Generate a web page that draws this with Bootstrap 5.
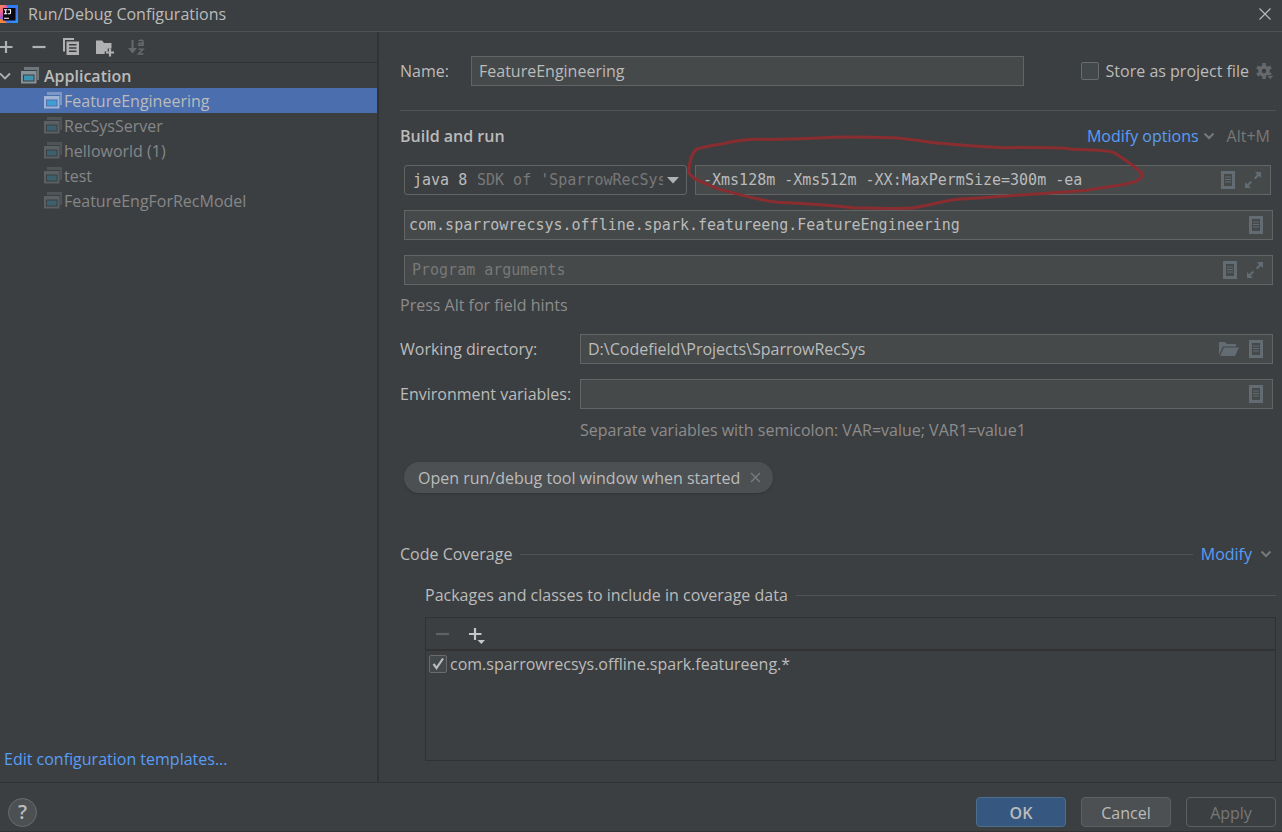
<!DOCTYPE html>
<html lang="en" data-bs-theme="dark">
<head>
<meta charset="utf-8">
<meta name="viewport" content="width=device-width, initial-scale=1">
<title>Run/Debug Configurations</title>
<link href="https://cdn.jsdelivr.net/npm/bootstrap@5.3.0/dist/css/bootstrap.min.css" rel="stylesheet">
<style>
  body { background: #3c3f41; color: #bbb; font: 16px/24px "Open Sans", "Noto Sans", sans-serif; }
  svg { display: block; flex: none; }
  a, .link-btn { color: #589df6; text-decoration: none; }
  button { color: inherit; }
  .plain { background: none; border: 0; padding: 0; }
  .titlebar { height: 32px; border-bottom: 1px solid #515151; padding: 0 10px 3px 0; }
  .title { gap: 10px; }
  .sidebar { width: 379px; border-right: 2px solid #323232; }
  .toolbar-top { height: 31px; border-bottom: 1px solid #323232; gap: 12px; margin-left: -4px; }
  .tree-item { height: 25px; color: #858789; padding-left: 44px; gap: 2px; }
  .tree-item.root { color: #bbb; font-weight: 600; padding-left: 0; gap: 5px; }
  .tree-item.selected { background: #4b6eaf; color: #bbb; }
  .tree-item .ico { opacity: .4; }
  .tree-item.selected .ico, .tree-item.root .ico { opacity: 1; }
  .edit-link { padding: 0 4px 11px; }
  .pane { padding: 24px 6px 21px 21px; min-width: 0; }
  .field { height: 30px; border: 1px solid #646464; background: #45494a; min-width: 0; padding: 0 9px 0 7px; gap: 10px; }
  .field input { background: none; border: 0; color: inherit; padding: 0; min-width: 0; outline: 0; height: 28px; }
  .field input::placeholder { color: #787878; opacity: 1; }
  .mono { font-family: "DejaVu Sans Mono", monospace; font-size: 15px; }
  .inset { margin: 0 3px 0 4px; }
  .rule { height: 1px; background: #515456; }
  .name-label { width: 71px; }
  .store { margin-left: 57px; gap: 7px; }
  .wide-label { width: 180px; }
  .head { margin: 13px 6px 17px 0; }
  .head strong { font-weight: 600; }
  .jdk-row { display: grid; grid-template-columns: 283px 1fr; gap: 8px; margin-right: 2px; }
  .jdk { border-radius: 3px; background: none; padding: 0 7px 0 8px; gap: 4px; }
  .jdk select { appearance: none; background: none; border: 0; padding: 0; color: #bbb; outline: 0; }
  .jdk label { color: #787878; white-space: pre; overflow: hidden; min-width: 0; padding-left: 5px; }
  .stack { gap: 15px; }
  .hint { color: #8c8c8c; margin: 8px 0 17px; }
  .env-hint { color: #8c8c8c; margin-top: 9px; }
  .faint { color: #787878; }
  .annotation { position: absolute; left: -16px; top: -41px; pointer-events: none; z-index: 2; }
  .check { appearance: none; width: 18px; height: 18px; margin: 0; border: 1px solid #6b6b6b; border-radius: 2px; background: #43494a; flex: none; }
  .check:checked { background: #43494a url("data:image/svg+xml,%3Csvg xmlns='http://www.w3.org/2000/svg' viewBox='0 0 16 16'%3E%3Cpath d='M3.5 8l3 4L13 2.5' fill='none' stroke='%23bbb' stroke-width='2.2'/%3E%3C/svg%3E") center/16px no-repeat; }
  .chip { height: 31px; border-radius: 16px; background: #4c5052; padding: 0 12px 0 14px; gap: 10px; box-shadow: 0 1px 2px #333; margin: 20px 0 49px 4px; }
  .packages { padding-left: 25px; margin: 17px 0 10px; }
  .box { border: 1px solid #323232; margin-left: 25px; }
  .box-tools { height: 33px; border-bottom: 2px solid #323232; padding: 0 10px; gap: 18px; }
  .box-row { gap: 3px; padding: 1px 3px; }
  .footer { border-top: 1px solid #323232; border-bottom: 1px solid #323232; padding: 14px 6px 4px 8px; gap: 15px; }
  .dlg { width: 90px; height: 30px; border: 1px solid #5e6060; border-radius: 4px; background: #4c5052; padding: 2px 0 0; }
  .dlg.ok { background: #365880; border-color: #4c708c; font-weight: 600; }
  .dlg.off { background: none; color: #777; }
  .help { width: 29px; height: 29px; border: 1px solid #6a6d6e; border-radius: 50%; background: #4c5052; font-size: 20px; font-weight: 600; padding: 0; }
</style>
</head>
<body>
<svg width="0" height="0" class="position-absolute" aria-hidden="true">
  <defs>
    <symbol id="app" viewBox="0 0 18 17"><path d="M3 0h15v13h-2V3H3z" fill="#87939a" opacity=".65"/><path d="M0 4h15.500v12.500H0zM2 7.500v7h11.500v-7z" fill="#87939a" fill-rule="evenodd"/><path d="M3 8.500h9.500v5H3z" fill="#3e93b0"/></symbol>
    <symbol id="app-sel" viewBox="0 0 18 17"><path d="M3 0h15v13h-2V3H3z" fill="#9fb4d4" opacity=".6"/><path d="M0 4h15.500v12.500H0zM2 7.500v7h11.500v-7z" fill="#9fb4d4" fill-rule="evenodd"/><path d="M3 8.500h9.500v5H3z" fill="#3f9fd5"/></symbol>
    <symbol id="list" viewBox="0 0 14 18"><path d="M0 0h14v18H0zM3 3v12h8V3z" fill="#626c72" fill-rule="evenodd"/><path d="M4 6h6M4 8.500h6M4 11h6" stroke="#626c72" stroke-width="1.200"/></symbol>
    <symbol id="expand" viewBox="0 0 16 16"><path d="M10 0h6v6l-2-2-3.600 3.600-1.500-1.500L12 2.500zM0 10l2.200 2.200 3.400-3.500 1.500 1.500L3.700 13.700 6 16H0z" fill="#626c72"/></symbol>
    <symbol id="chev" viewBox="0 0 12 8"><path d="M1.500 1.500L6 6l4.500-4.500" fill="none" stroke="currentColor" stroke-width="2"/></symbol>
  </defs>
</svg>

<div class="d-flex flex-column min-vh-100">
  <header class="titlebar d-flex align-items-center justify-content-between">
    <div class="title d-flex align-items-center">
      <svg width="18" height="18" viewBox="0 0 18 18"><defs><linearGradient id="lg" x2="1" y2="1"><stop offset="0" stop-color="#fc8a4d"/><stop offset=".25" stop-color="#ee5a98"/><stop offset=".5" stop-color="#5c62e8"/><stop offset="1" stop-color="#18a0ff"/></linearGradient></defs><path d="M0 0h18v18H0z" fill="url(#lg)"/><path d="M6 0h12v5l-3-2H8z" fill="#2f7df6"/><path d="M0 14v4h7l-3-3z" fill="#f5853d"/><path d="M3 3h12.500v12.500H3z" fill="#0b0610"/><path d="M4 4.800h3.400M5.700 4.800v4M4 8.800h3.400M8 4.800h2.500v3q0 1-1 1H8M4 13.300h5" stroke="#fff" stroke-width="1.100" fill="none"/></svg>
      <span>Run/Debug Configurations</span>
    </div>
    <button class="plain" aria-label="Close"><svg width="14" height="14" viewBox="0 0 14 14"><path d="M1.500 1.500l11 11m0-11l-11 11" stroke="#bbb" stroke-width="1.100"/></svg></button>
  </header>

  <div class="d-flex flex-grow-1">
    <aside class="sidebar d-flex flex-column flex-shrink-0">
      <div class="toolbar-top d-flex align-items-center">
        <button class="plain" aria-label="Add"><svg width="20" height="20" viewBox="0 0 20 20"><path d="M10 4v12M4 10h12.500" stroke="#afb1b3" stroke-width="2.200"/></svg></button>
        <button class="plain" aria-label="Remove"><svg width="20" height="20" viewBox="0 0 20 20"><path d="M4.500 10h13" stroke="#afb1b3" stroke-width="2.200"/></svg></button>
        <button class="plain" aria-label="Copy"><svg width="20" height="20" viewBox="0 0 20 20"><path d="M3 14.500V1h11v2H5v11.500z" fill="#afb1b3"/><path d="M6.500 4.500H19V18H6.500zM9 7v1.500h7.500V7zm0 3.200v1.500h7.500v-1.500zm0 3.200v1.500h7.500v-1.500z" fill="#afb1b3" fill-rule="evenodd"/></svg></button>
        <button class="plain" aria-label="New folder"><svg width="22" height="20" viewBox="0 0 22 20"><path d="M4 3.500h6l2 2.500h7.500v5.500h-3.800v3h-3V17H4z" fill="#afb1b3"/><path d="M18 11.500v8M14 15.500h8" stroke="#afb1b3" stroke-width="2.200"/></svg></button>
        <button class="plain" aria-label="Sort configurations" disabled><svg width="20" height="20" viewBox="0 0 20 20"><path d="M6.500 3v12" stroke="#66696b" stroke-width="2"/><path d="M2 11h9l-4.500 5.500z" fill="#66696b"/><path d="M12.500 3.800q4.500-1.500 4.500 1V9m0-3q-4.500-.2-4.500 1.500 0 2 4.500 0M12.500 12.200H17l-4.500 4.800h5" fill="none" stroke="#66696b" stroke-width="1.600"/></svg></button>
      </div>
      <div class="tree-item root d-flex align-items-center"><svg width="16" height="12" viewBox="0 0 16 12"><path d="M0 3.500L5 8.500l5-5" fill="none" stroke="#afb1b3" stroke-width="1.800"/></svg><svg class="ico" width="18" height="17"><use href="#app"/></svg><span>Application</span></div>
      <div class="tree-item selected d-flex align-items-center"><svg class="ico" width="18" height="17"><use href="#app-sel"/></svg><span>FeatureEngineering</span></div>
      <div class="tree-item d-flex align-items-center"><svg class="ico" width="18" height="17"><use href="#app"/></svg><span>RecSysServer</span></div>
      <div class="tree-item d-flex align-items-center"><svg class="ico" width="18" height="17"><use href="#app"/></svg><span>helloworld (1)</span></div>
      <div class="tree-item d-flex align-items-center"><svg class="ico" width="18" height="17"><use href="#app"/></svg><span>test</span></div>
      <div class="tree-item d-flex align-items-center"><svg class="ico" width="18" height="17"><use href="#app"/></svg><span>FeatureEngForRecModel</span></div>
      <div class="edit-link mt-auto"><a href="#">Edit configuration templates...</a></div>
    </aside>

    <main class="pane d-flex flex-column flex-grow-1">
      <div class="d-flex align-items-center">
        <label class="name-label" for="name">Name:</label>
        <div class="field flex-grow-1 d-flex"><input id="name" class="w-100" value="FeatureEngineering"></div>
        <div class="store d-flex align-items-center">
          <input type="checkbox" class="check" id="store"><label for="store">Store as project file</label>
          <button class="plain" aria-label="Storage options"><svg width="20" height="20" viewBox="0 0 20 20"><circle cx="8" cy="10" r="4" fill="none" stroke="#66696b" stroke-width="3.400"/><path d="M8 2v3m0 10v3M1.100 6l2.700 1.500m8.400 5l2.700 1.500M1.100 14l2.700-1.500m8.400-5L14.900 6" stroke="#66696b" stroke-width="3.600"/><path d="M10.500 14.500h7.500l-3.700 4z" fill="#66696b" stroke="#3c3f41" stroke-width=".8"/></svg></button>
        </div>
      </div>
      <div class="rule mt-4"></div>

      <div class="head d-flex align-items-center">
        <strong class="me-auto">Build and run</strong>
        <button class="plain link-btn">Modify options</button>
        <svg class="faint ms-1 me-2" width="12" height="8"><use href="#chev"/></svg>
        <span class="faint ms-1">Alt+M</span>
      </div>

      <div class="stack inset d-flex flex-column mono">
        <div class="jdk-row">
          <div class="field jdk d-flex align-items-center">
            <select id="jdk"><option>java 8</option></select>
            <label class="flex-grow-1" for="jdk">SDK of 'SparrowRecSys</label>
            <svg width="12" height="8" viewBox="0 0 12 8"><path d="M0 1h12L6 7.500z" fill="#afb1b3"/></svg>
          </div>
          <div class="field d-flex align-items-center position-relative">
            <input class="flex-grow-1" aria-label="VM options" value="-Xms128m -Xms512m -XX:MaxPermSize=300m -ea">
            <svg width="14" height="18"><use href="#list"/></svg><svg width="16" height="16"><use href="#expand"/></svg>
            <svg class="annotation" width="480" height="95" viewBox="0 0 1440 285" aria-hidden="true"><path d="M50 72C80 65 100 60 122 58 160 48 200 43 240 43 300 44 350 42 430 38 480 35 560 36 640 38 700 42 730 50 780 55 850 60 900 66 970 68 1040 68 1130 66 1170 72 1220 76 1260 72 1300 82 1330 100 1350 115 1375 135 1390 145 1390 155 1375 165 1350 180 1300 182 1220 196 1130 204 1050 208 960 214 900 222 850 218 800 228 740 240 720 248 680 250 620 252 560 248 520 248 440 240 380 236 290 232 240 225 180 210 110 190 70 172 30 160 26 140 28 110 35 85 50 72z" fill="none" stroke="#8a2d30" stroke-width="9" stroke-linejoin="round"/></svg>
          </div>
        </div>
        <div class="field d-flex align-items-center ps-1">
          <input class="flex-grow-1" aria-label="Main class" value="com.sparrowrecsys.offline.spark.featureeng.FeatureEngineering">
          <svg width="14" height="18"><use href="#list"/></svg>
        </div>
        <div class="field d-flex align-items-center">
          <input class="flex-grow-1" aria-label="Program arguments" placeholder="Program arguments">
          <svg width="14" height="18"><use href="#list"/></svg><svg width="16" height="16"><use href="#expand"/></svg>
        </div>
      </div>
      <div class="hint">Press Alt for field hints</div>

      <div class="stack d-flex flex-column">
        <div class="d-flex align-items-center inset ms-0">
          <label class="wide-label" for="wd">Working directory:</label>
          <div class="field flex-grow-1 d-flex align-items-center">
            <input class="flex-grow-1" id="wd" value="D:\Codefield\Projects\SparrowRecSys">
            <svg width="20" height="14" viewBox="0 0 20 14"><path d="M0 13V0h6l2 2h9v2.500H4z" fill="#626c72"/><path d="M5 5.500h15L16 14H1z" fill="#626c72"/></svg>
            <svg width="14" height="18"><use href="#list"/></svg>
          </div>
        </div>
        <div class="d-flex align-items-center inset ms-0">
          <label class="wide-label" for="env">Environment variables:</label>
          <div class="field flex-grow-1 d-flex align-items-center">
            <input class="flex-grow-1" id="env"><svg width="14" height="18"><use href="#list"/></svg>
          </div>
        </div>
      </div>
      <div class="env-hint d-flex"><span class="wide-label"></span><span>Separate variables with semicolon: VAR=value; VAR1=value1</span></div>

      <div class="chip d-flex align-items-center align-self-start">
        <span>Open run/debug tool window when started</span>
        <button class="plain" aria-label="Remove option"><svg width="11" height="11" viewBox="0 0 11 11"><path d="M1 1l9 9m0-9l-9 9" stroke="#7a7d7f" stroke-width="1.300"/></svg></button>
      </div>

      <div class="d-flex align-items-center gap-2">
        <span>Code Coverage</span><div class="rule flex-grow-1"></div>
        <button class="plain link-btn">Modify</button><svg class="faint me-1 ms-n1" width="12" height="8"><use href="#chev"/></svg>
      </div>
      <div class="packages d-flex align-items-center gap-2"><span>Packages and classes to include in coverage data</span><div class="rule flex-grow-1"></div></div>
      <div class="box flex-grow-1">
        <div class="box-tools d-flex align-items-center">
          <button class="plain" aria-label="Remove package" disabled><svg width="14" height="20" viewBox="0 0 14 20"><path d="M0 10h13" stroke="#5f6264" stroke-width="2.200"/></svg></button>
          <button class="plain" aria-label="Add package"><svg width="18" height="20" viewBox="0 0 18 20"><path d="M7 4v12M1 10h12.500" stroke="#c4c6c8" stroke-width="2.200"/><path d="M9.500 16h7.500l-3.700 4z" fill="#c4c6c8"/></svg></button>
        </div>
        <div class="box-row d-flex align-items-center"><input type="checkbox" class="check" id="pkg" checked><label for="pkg">com.sparrowrecsys.offline.spark.featureeng.*</label></div>
      </div>
    </main>
  </div>

  <footer class="footer d-flex align-items-center">
    <button class="help me-auto d-flex align-items-center justify-content-center">?</button>
    <button class="dlg ok">OK</button>
    <button class="dlg">Cancel</button>
    <button class="dlg off" disabled>Apply</button>
  </footer>
</div>
<script src="https://cdn.jsdelivr.net/npm/bootstrap@5.3.0/dist/js/bootstrap.bundle.min.js"></script>
</body>
</html>
